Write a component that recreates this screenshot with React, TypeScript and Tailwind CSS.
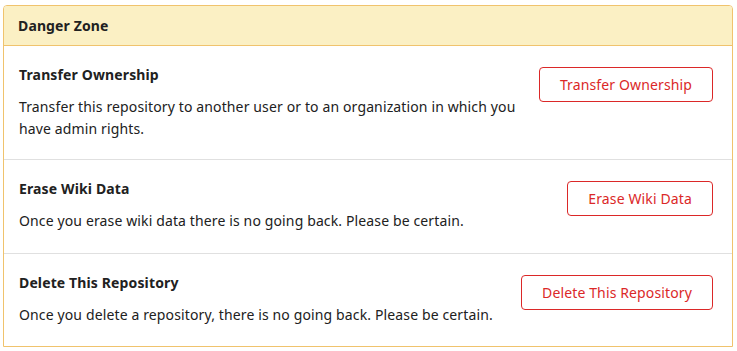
const ROWS = [
  {
    title: 'Transfer Ownership',
    desc: 'Transfer this repository to another user or to an organization in which you have admin rights.',
    action: 'Transfer Ownership',
    pad: 'pb-[19px]',
  },
  {
    title: 'Erase Wiki Data',
    desc: 'Once you erase wiki data there is no going back. Please be certain.',
    action: 'Erase Wiki Data',
    pad: 'pb-[21px]',
  },
  {
    title: 'Delete This Repository',
    desc: 'Once you delete a repository, there is no going back. Please be certain.',
    action: 'Delete This Repository',
    pad: 'pb-[20px]',
  },
]

export default function App() {
  return (
    <div
      className="bg-white pt-[5px] pl-[3px] text-[14px] tracking-[0.13px] text-[#212121]"
      style={{ fontFamily: '"Noto Sans", "Open Sans", Arial, sans-serif' }}
    >
      <div className="w-[730px] rounded-t-[4px] border border-[#f0c36d]">
        <div className="flex h-[40px] items-center rounded-t-[3px] border-b border-[#f0c36d] bg-[#fbf0c4] px-[14px] font-bold">
          Danger Zone
        </div>
        {ROWS.map((r, i) => (
          <div
            key={r.title}
            className={
              'flex items-start justify-between gap-3 pl-[15px] pr-[19px] pt-[19px] ' +
              r.pad +
              (i > 0 ? ' border-t border-[#e0e0e0]' : '')
            }
          >
            <div className="max-w-[505px]">
              <div className="h-[20px] font-bold leading-[20px]">{r.title}</div>
              <p className="mt-[11px] leading-[22px]">{r.desc}</p>
            </div>
            <button className="mt-[2px] h-[35px] shrink-0 rounded-[4px] border border-[#db2828] bg-white px-5 text-[14px] tracking-[0.13px] text-[#db2828]">
              {r.action}
            </button>
          </div>
        ))}
      </div>
    </div>
  )
}
